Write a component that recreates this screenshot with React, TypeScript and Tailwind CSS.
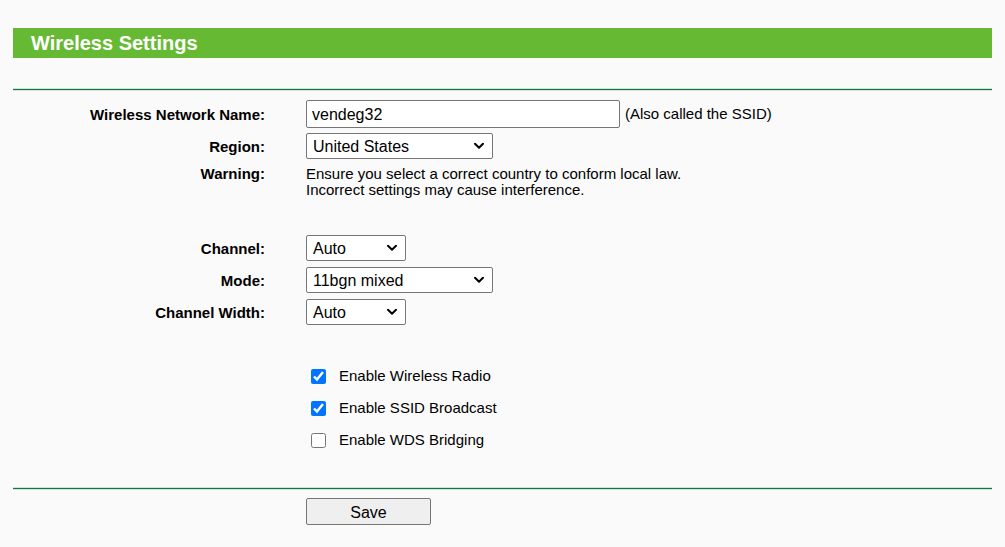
import React, { useState } from 'react';

const font = { fontFamily: '"Liberation Sans", Arial, sans-serif' };

const Chevron = () => (
  <svg
    className="pointer-events-none absolute right-[9px] top-1/2 -translate-y-1/2"
    width="10"
    height="7"
    viewBox="0 0 10 7"
    fill="none"
  >
    <path d="M1 1.2l4 4 4-4" stroke="#000" strokeWidth="2" strokeLinecap="round" strokeLinejoin="round" />
  </svg>
);

interface SelectProps {
  value: string;
  options: string[];
  width: string;
  onChange: (v: string) => void;
}

const Select: React.FC<SelectProps> = ({ value, options, width, onChange }) => (
  <div className={`relative h-[26px] ${width}`}>
    <select
      value={value}
      onChange={(e) => onChange(e.target.value)}
      className="h-full w-full appearance-none rounded-[2px] border border-[#767676] bg-white pl-[6px] pr-6 pt-px text-[16px] text-black outline-none"
    >
      {options.map((o) => (
        <option key={o}>{o}</option>
      ))}
    </select>
    <Chevron />
  </div>
);

const Row: React.FC<{ label: string; className?: string; children: React.ReactNode }> = ({
  label,
  className = 'h-[26px] items-center',
  children,
}) => (
  <div className={`flex ${className}`}>
    <div className="w-[265px] shrink-0 pt-px text-right text-[15px] font-bold leading-4 text-black">{label}</div>
    <div className="ml-[41px] flex items-center">{children}</div>
  </div>
);

const Divider = () => (
  <div className="mx-[13px] h-[3px] border-y border-[#d2e2d6] bg-[#0f7a3c]" />
);

export default function App() {
  const [ssid, setSsid] = useState('vendeg32');
  const [region, setRegion] = useState('United States');
  const [channel, setChannel] = useState('Auto');
  const [mode, setMode] = useState('11bgn mixed');
  const [width, setWidth] = useState('Auto');
  const [radio, setRadio] = useState(true);
  const [broadcast, setBroadcast] = useState(true);
  const [wds, setWds] = useState(false);

  const checks = [
    { label: 'Enable Wireless Radio', value: radio, set: setRadio },
    { label: 'Enable SSID Broadcast', value: broadcast, set: setBroadcast },
    { label: 'Enable WDS Bridging', value: wds, set: setWds },
  ];

  return (
    <div className="min-h-[547px] w-full bg-[#fafafa] pt-[28px] text-black" style={font}>
      {/* header bar */}
      <div className="mx-[13px] flex h-[30px] items-center bg-[#66ba33] pl-[18px] text-[20px] font-bold text-white">
        Wireless Settings
      </div>

      <div className="mt-[30px]">
        <Divider />
      </div>

      <div className="mt-[9px] flex flex-col">
        <Row label="Wireless Network Name:" className="h-[28px] items-center">
          <input
            value={ssid}
            onChange={(e) => setSsid(e.target.value)}
            className="h-[28px] w-[314px] rounded-[2px] border border-[#767676] bg-white pl-[5px] pt-[1px] text-[16px] text-black outline-none"
          />
          <span className="ml-[5px] text-[15px]">(Also called the SSID)</span>
        </Row>

        <div className="mt-[5px]">
          <Row label="Region:">
            <Select value={region} options={['United States', 'Hungary', 'Germany']} width="w-[187px]" onChange={setRegion} />
          </Row>
        </div>

        <div className="mt-[6px]">
          <Row label="Warning:" className="h-[33px] items-start">
            <div className="pt-px text-[15px] leading-4">
              Ensure you select a correct country to conform local law.
              <br />
              Incorrect settings may cause interference.
            </div>
          </Row>
        </div>

        <div className="mt-[37px] flex flex-col gap-[6px]">
          <Row label="Channel:">
            <Select value={channel} options={['Auto', '1', '6', '11']} width="w-[100px]" onChange={setChannel} />
          </Row>
          <Row label="Mode:">
            <Select value={mode} options={['11bgn mixed', '11bg mixed', '11n only']} width="w-[187px]" onChange={setMode} />
          </Row>
          <Row label="Channel Width:">
            <Select value={width} options={['Auto', '20MHz', '40MHz']} width="w-[100px]" onChange={setWidth} />
          </Row>
        </div>

        <div className="ml-[306px] mt-[35px] flex flex-col">
          {checks.map((c) => (
            <label key={c.label} className="flex h-[32px] items-center text-[15px]">
              <input
                type="checkbox"
                checked={c.value}
                onChange={(e) => c.set(e.target.checked)}
                className="m-0 ml-[5px] h-[15px] w-[15px] accent-[#0075ff]"
              />
              <span className="ml-[13px] pt-px">{c.label}</span>
            </label>
          ))}
        </div>
      </div>

      <div className="mt-[31px]">
        <Divider />
      </div>

      <div className="ml-[306px] mt-[8px]">
        <button className="h-[27px] w-[125px] rounded-[2px] border border-[#767676] bg-[#efefef] pt-[2px] text-[16px] text-black">
          Save
        </button>
      </div>
    </div>
  );
}
